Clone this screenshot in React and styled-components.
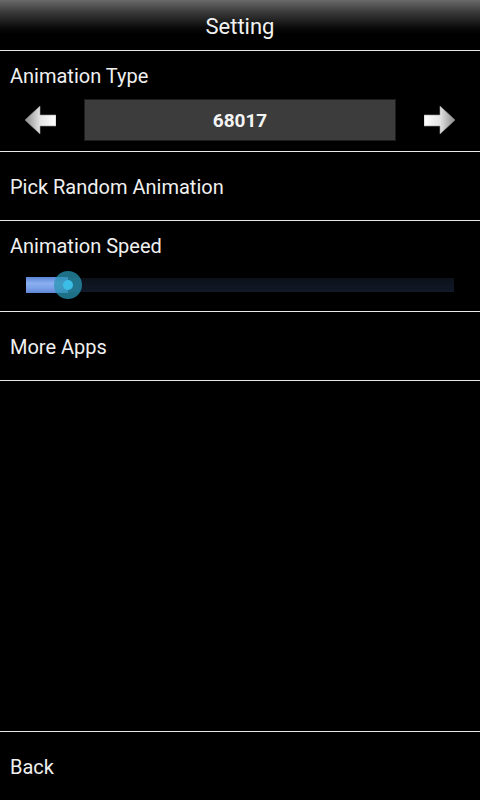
import React from "react";
import styled, { createGlobalStyle } from "styled-components";

const Global = createGlobalStyle`
  html, body { margin: 0; padding: 0; background: #000; }
  body { font-family: Roboto, "Noto Sans", sans-serif; color: #fff; }
`;

const Screen = styled.div`
  width: 480px;
  height: 800px;
  display: flex;
  flex-direction: column;
  background: #000;
  overflow: hidden;
`;

const Header = styled.div`
  height: 50px;
  flex: none;
  display: flex;
  align-items: center;
  justify-content: center;
  background: linear-gradient(to bottom, #6a6a6a 0px, #3a3a3a 12px, #0a0a0a 28px, #000 34px);
  font-size: 22px;
  color: #f2f2f2;
  padding-top: 2px;
  box-sizing: border-box;
`;

const Divider = styled.div`
  height: 1px;
  flex: none;
  background: #e8e8e8;
`;

const Section = styled.div`
  flex: none;
  display: flex;
  flex-direction: column;
  padding: ${(p) => p.$pad || "0"};
  box-sizing: border-box;
  height: ${(p) => p.$h}px;
`;

const Row = styled.div`
  flex: none;
  height: 68px;
  display: flex;
  align-items: center;
  padding: 2px 10px 0 10px;
  font-size: 20px;
  color: #f0f0f0;
  box-sizing: border-box;
`;

const Label = styled.div`
  font-size: 20px;
  color: #f0f0f0;
  padding-left: 10px;
  line-height: 24px;
`;

const Picker = styled.div`
  display: flex;
  align-items: center;
  justify-content: space-between;
  padding: 0 25px;
  margin-top: ${(p) => p.$mt}px;
`;

const ValueBox = styled.div`
  width: 312px;
  height: 42px;
  box-sizing: border-box;
  background: #3c3c3c;
  border: 1px solid #1e1e1e;
  display: flex;
  align-items: center;
  justify-content: center;
  font-weight: bold;
  font-size: 19px;
  color: #f4f4f4;
`;

const SliderWrap = styled.div`
  position: relative;
  margin: ${(p) => p.$mt}px 26px 0 26px;
  height: 30px;
  display: flex;
  align-items: center;
`;

const Track = styled.div`
  width: 100%;
  height: 14px;
  background: linear-gradient(to bottom, #0c111a, #111827);
`;

const Fill = styled.div`
  position: absolute;
  left: 0;
  top: 7px;
  height: 16px;
  background: linear-gradient(to bottom, #5a86d8, #8ab0f0 40%, #7aa0e8 70%, #5f86d6);
`;

const Thumb = styled.div`
  position: absolute;
  top: 1px;
  width: 28px;
  height: 28px;
  margin-left: -14px;
  border-radius: 50%;
  background: rgba(40, 150, 180, 0.75);
  display: flex;
  align-items: center;
  justify-content: center;
  &::after {
    content: "";
    width: 10px;
    height: 10px;
    border-radius: 50%;
    background: #3cbde8;
  }
`;

const Spacer = styled.div`
  flex: 1;
`;

function Arrow({ dir }) {
  const id = `g-${dir}`;
  const flip = dir === "right";
  return (
    <svg width="31" height="28" viewBox="0 0 31 28" style={flip ? { transform: "scaleX(-1)" } : undefined}>
      <defs>
        <linearGradient id={id} x1="0" y1="0" x2="1" y2="0">
          <stop offset="0" stopColor="#8a8a8a" />
          <stop offset="0.5" stopColor="#e6e6e6" />
          <stop offset="1" stopColor="#ffffff" />
        </linearGradient>
      </defs>
      <path d="M0 14 L15 0 L15 9 L31 9 L31 20 L15 20 L15 28 Z" fill={`url(#${id})`} stroke="#9a9a9a" strokeWidth="0.6" />
    </svg>
  );
}

export default function App() {
  const speed = 42;
  return (
    <Screen>
      <Global />
      <Header>Setting</Header>
      <Divider />
      <Section $h={100} $pad="13px 0 0 0">
        <Label>Animation Type</Label>
        <Picker $mt={11}>
          <Arrow dir="left" />
          <ValueBox>68017</ValueBox>
          <Arrow dir="right" />
        </Picker>
      </Section>
      <Divider />
      <Row>Pick Random Animation</Row>
      <Divider />
      <Section $h={90} $pad="13px 0 0 0">
        <Label>Animation Speed</Label>
        <SliderWrap $mt={12}>
          <Track />
          <Fill style={{ width: speed }} />
          <Thumb style={{ left: speed }} />
        </SliderWrap>
      </Section>
      <Divider />
      <Row>More Apps</Row>
      <Divider />
      <Spacer />
      <Divider />
      <Row>Back</Row>
    </Screen>
  );
}
